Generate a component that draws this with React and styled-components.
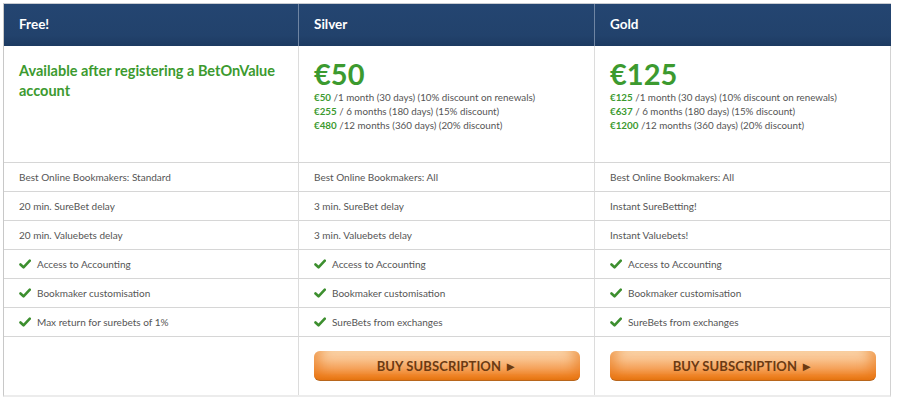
import React from "react";
import styled, { createGlobalStyle } from "styled-components";

const Global = createGlobalStyle`
  html, body { margin: 0; padding: 0; background: #fff; }
  body { font-family: "Lato", "Noto Sans", sans-serif; }
`;

const Page = styled.div`
  padding: 3px 0 0 3px;
  width: 888px;
`;

const Table = styled.div`
  display: grid;
  grid-template-columns: 295px 296px 296px;
  border-top: 1px solid #c9ccd2;
  border-left: 1px solid #c8c8c8;
  border-right: 1px solid #d2d2d2;
  border-bottom: 2px solid #ececec;
`;

const Head = styled.div`
  height: 42px;
  display: flex;
  align-items: center;
  padding-left: 15px;
  padding-bottom: 2px;
  box-sizing: border-box;
  color: #fff;
  font-size: 13.5px;
  font-weight: 700;
  background: linear-gradient(to bottom, #244571 0%, #22426c 75%, #1c3a61 100%);
  border-right: ${(p) => (p.$last ? "none" : "1px solid #6f85a3")};
`;

const Cell = styled.div`
  box-sizing: border-box;
  height: ${(p) => p.$h || 29}px;
  padding: ${(p) => p.$pad || "0 0 0 15px"};
  display: flex;
  align-items: ${(p) => (p.$top ? "flex-start" : "center")};
  flex-direction: ${(p) => (p.$col ? "column" : "row")};
  gap: ${(p) => (p.$col ? 0 : 6)}px;
  border-right: ${(p) => (p.$last ? "none" : "1px solid #dcdcdc")};
  border-bottom: ${(p) => (p.$noBottom ? "none" : "1px solid #d6d6d6")};
  color: #555;
  font-size: 10px;
`;

const Intro = styled.div`
  color: #3c9a2f;
  font-size: 14.5px;
  font-weight: 700;
  line-height: 20px;
`;

const BigPrice = styled.div`
  color: #3c9a2f;
  font-size: 29px;
  font-weight: 700;
  line-height: 32px;
`;

const PriceLine = styled.div`
  color: #555;
  font-size: 9.8px;
  line-height: 14px;
  b { color: #3c9a2f; font-weight: 700; }
`;

const Button = styled.button`
  width: 266px;
  height: 30px;
  border: none;
  border-bottom: 1px solid #b8661c;
  border-radius: 6px;
  cursor: pointer;
  font-family: "Lato", "Noto Sans", sans-serif;
  font-weight: 700;
  font-size: 13px;
  color: #6b3a12;
  letter-spacing: 0.1px;
  background: linear-gradient(to bottom, #fbd6ad 0%, #f9c08a 30%, #f5a25a 60%, #ef8427 85%, #e77411 100%);
  box-shadow: inset 14px 0 12px -8px rgba(232, 116, 20, 0.55),
    inset -14px 0 12px -8px rgba(232, 116, 20, 0.55);
`;

const Check = () => (
  <svg width="12" height="10" viewBox="0 0 12 10" style={{ flex: "none" }}>
    <path d="M1.5 5.5 L4.5 8.3 L10.8 1.6" fill="none" stroke="#3d8f2f" strokeWidth="2.6" strokeLinecap="round" strokeLinejoin="round" />
  </svg>
);

const rows = [
  [
    { t: "Best Online Bookmakers: Standard" },
    { t: "Best Online Bookmakers: All" },
    { t: "Best Online Bookmakers: All" },
  ],
  [{ t: "20 min. SureBet delay" }, { t: "3 min. SureBet delay" }, { t: "Instant SureBetting!" }],
  [{ t: "20 min. Valuebets delay" }, { t: "3 min. Valuebets delay" }, { t: "Instant Valuebets!" }],
  [
    { t: "Access to Accounting", c: 1 },
    { t: "Access to Accounting", c: 1 },
    { t: "Access to Accounting", c: 1 },
  ],
  [
    { t: "Bookmaker customisation", c: 1 },
    { t: "Bookmaker customisation", c: 1 },
    { t: "Bookmaker customisation", c: 1 },
  ],
  [
    { t: "Max return for surebets of 1%", c: 1 },
    { t: "SureBets from exchanges", c: 1 },
    { t: "SureBets from exchanges", c: 1 },
  ],
];

const plans = [
  {
    big: "€50",
    lines: [
      ["€50", " /1 month (30 days) (10% discount on renewals)"],
      ["€255", " / 6 months (180 days) (15% discount)"],
      ["€480", " /12 months (360 days) (20% discount)"],
    ],
  },
  {
    big: "€125",
    lines: [
      ["€125", " /1 month (30 days) (10% discount on renewals)"],
      ["€637", " / 6 months (180 days) (15% discount)"],
      ["€1200", " /12 months (360 days) (20% discount)"],
    ],
  },
];

export default function App() {
  return (
    <>
      <Global />
      <Page>
        <Table>
          <Head>Free!</Head>
          <Head>Silver</Head>
          <Head $last>Gold</Head>

          <Cell $h={117} $top $pad="15px 0 0 15px">
            <Intro>
              Available after registering a BetOnValue
              <br />
              account
            </Intro>
          </Cell>
          {plans.map((p, i) => (
            <Cell key={i} $h={117} $top $col $last={i === 1} $pad="12px 0 0 15px">
              <BigPrice>{p.big}</BigPrice>
              {p.lines.map((l, j) => (
                <PriceLine key={j}>
                  <b>{l[0]}</b>
                  {l[1]}
                </PriceLine>
              ))}
            </Cell>
          ))}

          {rows.map((r, i) =>
            r.map((c, j) => (
              <Cell key={`${i}-${j}`} $last={j === 2}>
                {c.c ? <Check /> : null}
                {c.t}
              </Cell>
            ))
          )}

          <Cell $h={58} $noBottom />
          <Cell $h={58} $noBottom>
            <Button>BUY SUBSCRIPTION ►</Button>
          </Cell>
          <Cell $h={58} $noBottom $last>
            <Button>BUY SUBSCRIPTION ►</Button>
          </Cell>
        </Table>
      </Page>
    </>
  );
}
